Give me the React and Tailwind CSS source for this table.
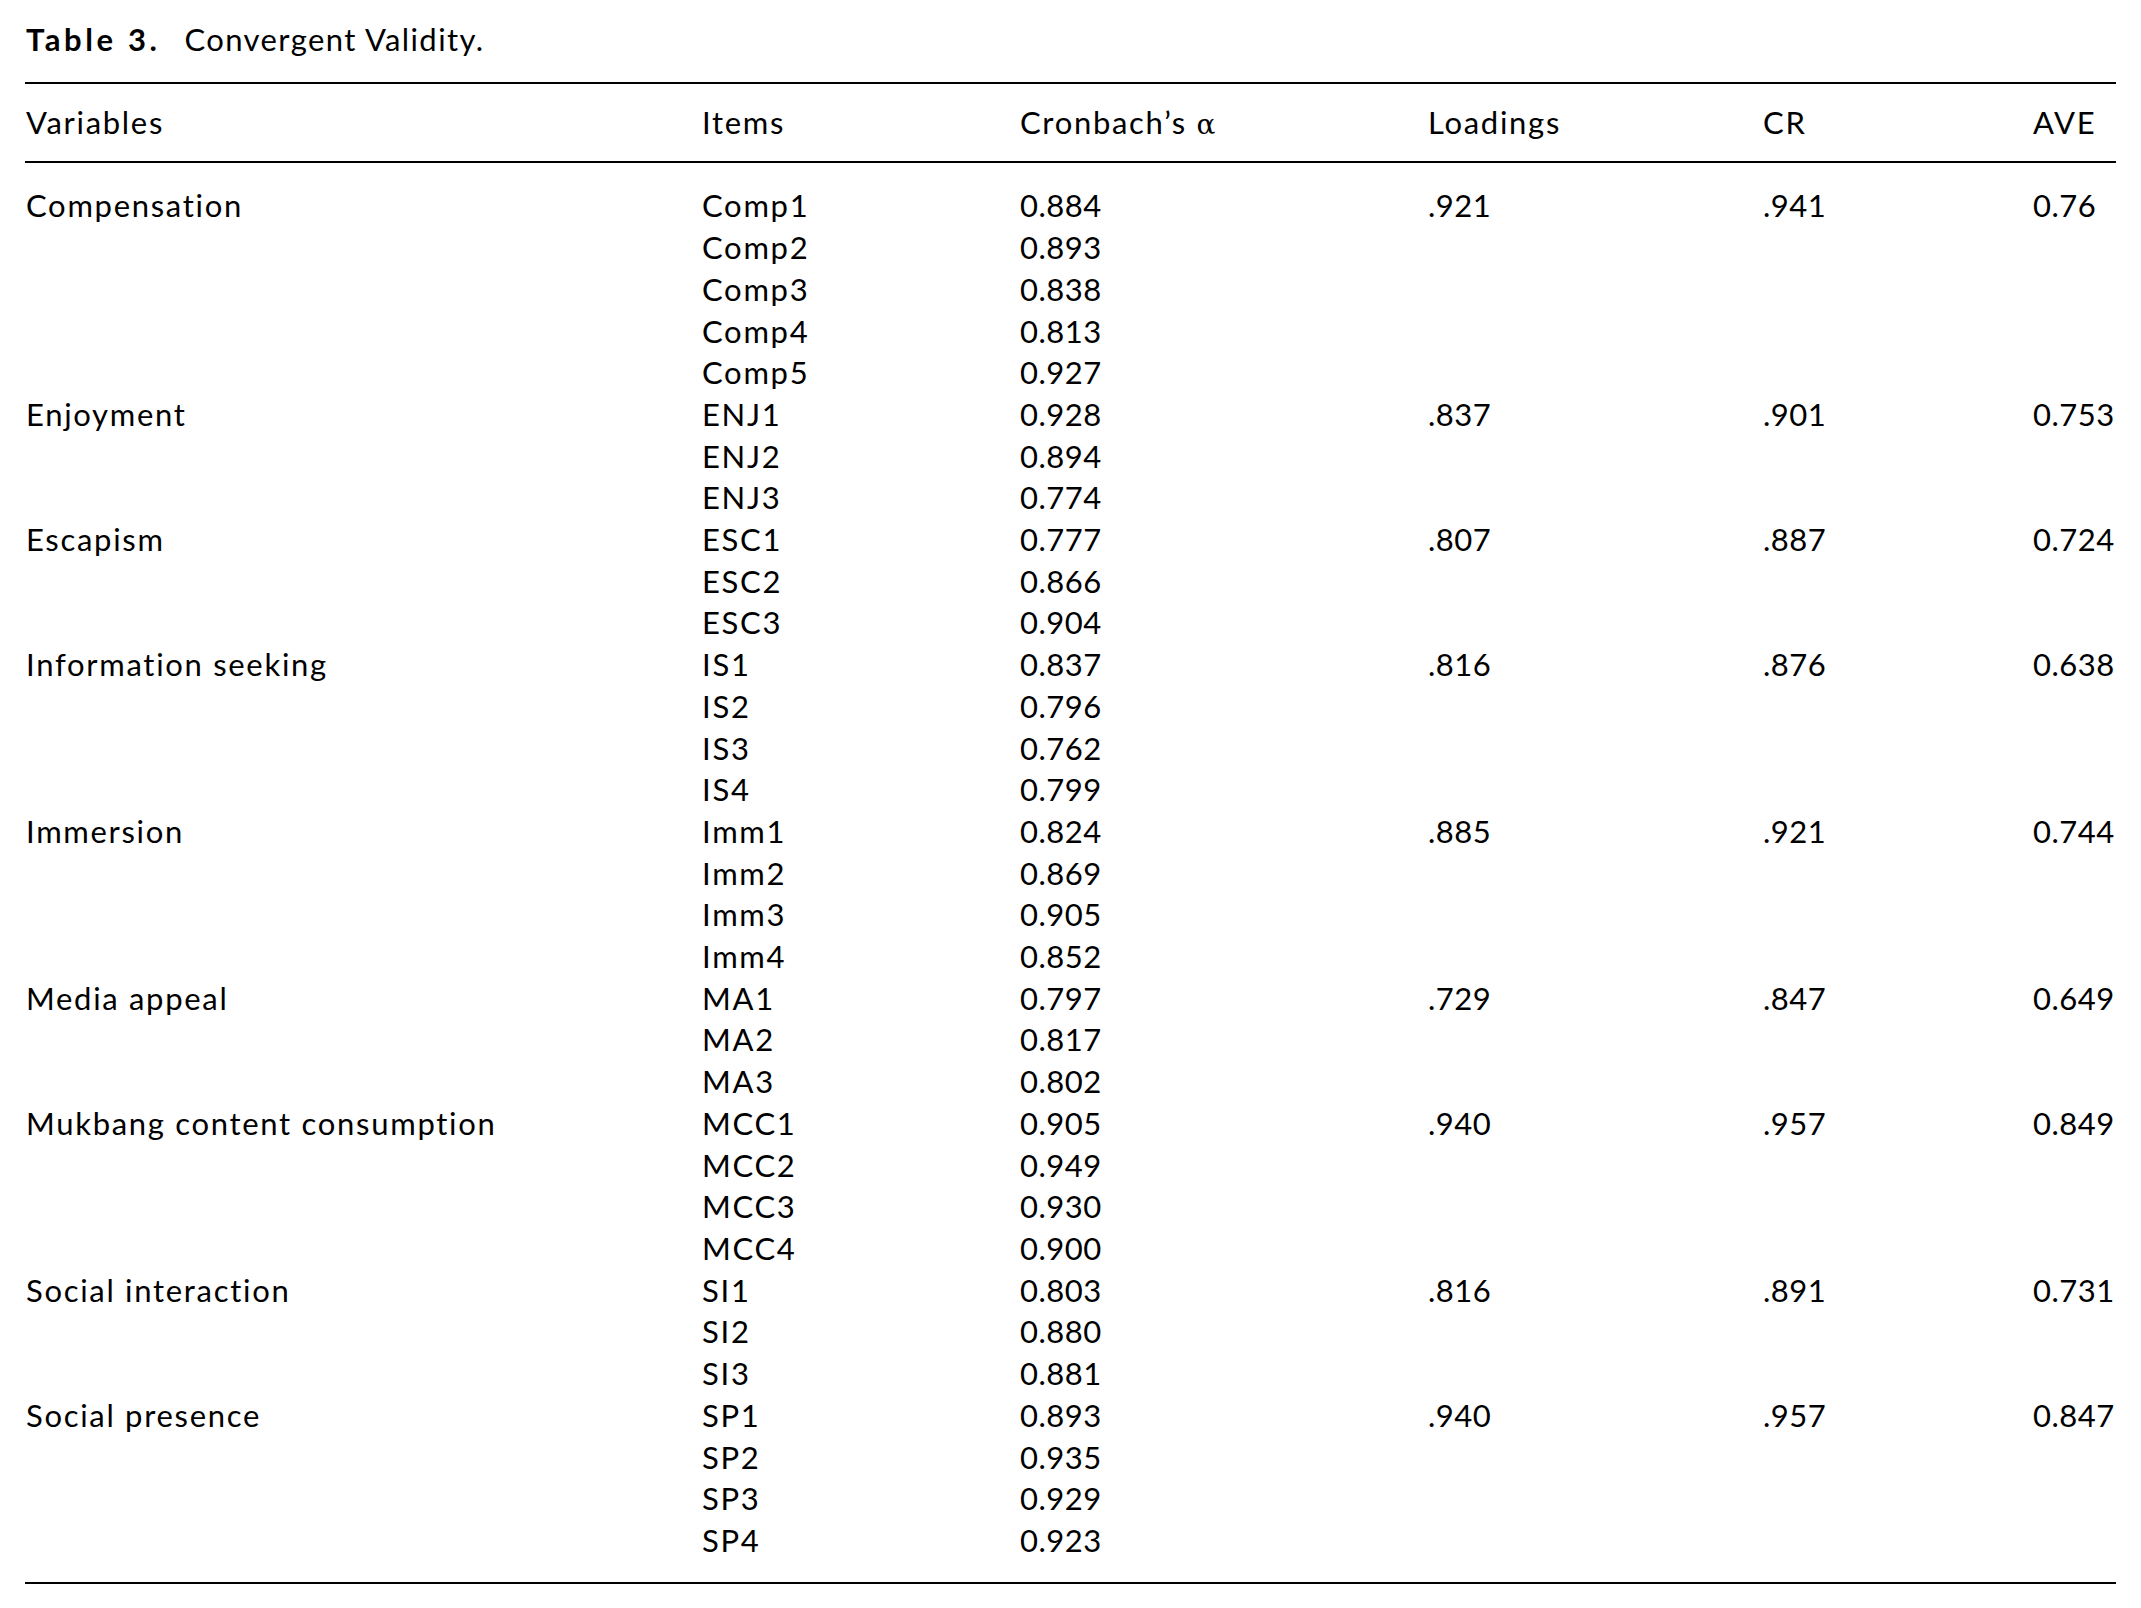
import React from "react";

// one entry per variable, items listed with their alpha values
const groups = [
  { name: "Compensation", loading: ".921", cr: ".941", ave: "0.76", items: [["Comp1", "0.884"], ["Comp2", "0.893"], ["Comp3", "0.838"], ["Comp4", "0.813"], ["Comp5", "0.927"]] },
  { name: "Enjoyment", loading: ".837", cr: ".901", ave: "0.753", items: [["ENJ1", "0.928"], ["ENJ2", "0.894"], ["ENJ3", "0.774"]] },
  { name: "Escapism", loading: ".807", cr: ".887", ave: "0.724", items: [["ESC1", "0.777"], ["ESC2", "0.866"], ["ESC3", "0.904"]] },
  { name: "Information seeking", loading: ".816", cr: ".876", ave: "0.638", items: [["IS1", "0.837"], ["IS2", "0.796"], ["IS3", "0.762"], ["IS4", "0.799"]] },
  { name: "Immersion", loading: ".885", cr: ".921", ave: "0.744", items: [["Imm1", "0.824"], ["Imm2", "0.869"], ["Imm3", "0.905"], ["Imm4", "0.852"]] },
  { name: "Media appeal", loading: ".729", cr: ".847", ave: "0.649", items: [["MA1", "0.797"], ["MA2", "0.817"], ["MA3", "0.802"]] },
  { name: "Mukbang content consumption", loading: ".940", cr: ".957", ave: "0.849", items: [["MCC1", "0.905"], ["MCC2", "0.949"], ["MCC3", "0.930"], ["MCC4", "0.900"]] },
  { name: "Social interaction", loading: ".816", cr: ".891", ave: "0.731", items: [["SI1", "0.803"], ["SI2", "0.880"], ["SI3", "0.881"]] },
  { name: "Social presence", loading: ".940", cr: ".957", ave: "0.847", items: [["SP1", "0.893"], ["SP2", "0.935"], ["SP3", "0.929"], ["SP4", "0.923"]] },
];

const cols = "grid grid-cols-[677px_318px_408px_335px_270px_83px]";
const num = "tracking-[0.5px]";

export default function App() {
  return (
    <div className="min-h-screen bg-white text-black font-['Lato','Noto_Sans',sans-serif] text-[31px] leading-[41.7px] tracking-[1.7px] pt-[19px] pl-[25px]">
      <div className="w-[2091px]">
        {/* 표 제목 */}
        <div className="pl-[1px]">
          <span className="font-bold tracking-[3.6px]">Table 3.</span>
          <span className="ml-[24px] tracking-[1.4px]">Convergent Validity.</span>
        </div>

        {/* 머리글 */}
        <div className={`${cols} mt-[21px] border-t-2 border-b-2 border-black pt-[18px] pb-[16px]`}>
          <div className="pl-[1px]">Variables</div>
          <div>Items</div>
          <div>
            Cronbach’s <span className="font-['DejaVu_Serif',serif] text-[28px]">α</span>
          </div>
          <div>Loadings</div>
          <div>CR</div>
          <div>AVE</div>
        </div>

        {/* 본문 */}
        <div className="pt-[22px] pb-[20px] border-b-2 border-black">
          {groups.map((g) =>
            g.items.map(([item, alpha], i) => (
              <div key={item} className={cols}>
                <div className="pl-[1px]">{i === 0 ? g.name : ""}</div>
                <div>{item}</div>
                <div className={num}>{alpha}</div>
                <div className={num}>{i === 0 ? g.loading : ""}</div>
                <div className={num}>{i === 0 ? g.cr : ""}</div>
                <div className={num}>{i === 0 ? g.ave : ""}</div>
              </div>
            ))
          )}
        </div>
      </div>
    </div>
  );
}
